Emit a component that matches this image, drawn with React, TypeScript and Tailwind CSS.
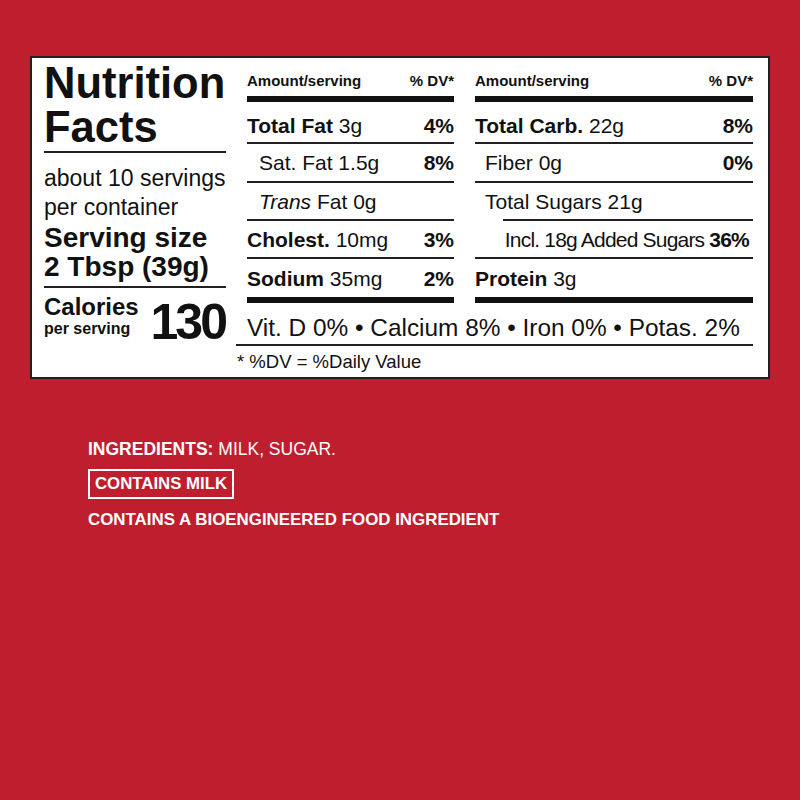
import React from 'react';

type RowProps = {
  label: React.ReactNode;
  dv?: string;
  h: string;
  line?: boolean;
  className?: string;
};

const Row = ({ label, dv, h, line = true, className = '' }: RowProps) => (
  <div className={`${h} flex items-center justify-between ${line ? 'border-b-2 border-[#231f20]' : ''} ${className}`}>
    <span>{label}</span>
    {dv && <span className="font-bold">{dv}</span>}
  </div>
);

const Header = () => (
  <>
    <div className="h-[38px] pt-[6px] flex items-center justify-between text-[15px] font-bold leading-none">
      <span>Amount/serving</span>
      <span>% DV*</span>
    </div>
    <div className="h-[6px] bg-[#111]" />
  </>
);

const App = () => {
  return (
    <div className="w-full h-[800px] bg-[#be1e2e] overflow-hidden font-['Liberation_Sans',Arial,sans-serif] pt-[56px]">
      {/* Nutrition label */}
      <div className="ml-[30px] w-[740px] h-[323px] bg-white border-2 border-[#231f20] flex gap-[21px] pl-[12px] text-[#111]">
        {/* Left column */}
        <div className="w-[182px] flex flex-col">
          <div className="pt-[3px] text-[43.5px] font-bold leading-[44px]">
            <div>Nutrition</div>
            <div>Facts</div>
          </div>
          <div className="h-[2px] bg-[#231f20] mt-[2px]" />
          <div className="mt-[11px] text-[23px] leading-[29px]">
            <div>about 10 servings</div>
            <div>per container</div>
          </div>
          <div className="mt-[1px] text-[28px] font-bold leading-[29px]">
            <div>Serving size</div>
            <div>2 Tbsp (39g)</div>
          </div>
          <div className="h-[2px] bg-[#231f20] mt-[5px]" />
          <div className="mt-[5px] flex items-start justify-between font-bold">
            <div>
              <div className="text-[24px] leading-[27px]">Calories</div>
              <div className="text-[16px] leading-[18px]">per serving</div>
            </div>
            <div className="mt-[4px] text-[50px] leading-[50px] tracking-[-3px] mr-[1px]">130</div>
          </div>
        </div>

        {/* Right part */}
        <div className="w-[506px] flex flex-col">
          <div className="flex gap-[21px] text-[21px] leading-none">
            {/* Middle column */}
            <div className="w-[207px] flex flex-col">
              <Header />
              <Row h="h-[42px] pt-[6px]" label={<><b>Total Fat</b> 3g</>} dv="4%" />
              <Row h="h-[39px]" className="pl-[12px]" label="Sat. Fat 1.5g" dv="8%" />
              <Row h="h-[38px]" className="pl-[12px]" label={<><i>Trans</i> Fat 0g</>} />
              <Row h="h-[38px]" label={<><b>Cholest.</b> 10mg</>} dv="3%" />
              <Row h="h-[38px]" line={false} label={<><b>Sodium</b> 35mg</>} dv="2%" />
              <div className="h-[6px] bg-[#111]" />
            </div>

            {/* Right column */}
            <div className="w-[278px] flex flex-col">
              <Header />
              <Row h="h-[42px] pt-[6px]" label={<><b>Total Carb.</b> 22g</>} dv="8%" />
              <Row h="h-[39px]" className="pl-[10px]" label="Fiber 0g" dv="0%" />
              <div className="h-[38px] flex flex-col">
                <div className="flex-1 flex items-center pl-[10px]">Total Sugars 21g</div>
                <div className="h-[2px] bg-[#231f20] ml-[28px]" />
              </div>
              <div className="h-[38px] flex items-center justify-end border-b-2 border-[#231f20] tracking-[-0.8px] pr-[4px]">
                <span>
                  Incl. 18g Added Sugars <b>36%</b>
                </span>
              </div>
              <Row h="h-[38px]" line={false} label={<><b>Protein</b> 3g</>} />
              <div className="h-[6px] bg-[#111]" />
            </div>
          </div>

          {/* Vitamins */}
          <div className="-ml-[11px] pl-[11px] h-[43px] pt-[10px] flex items-center border-b-2 border-[#231f20] text-[24.4px] leading-none whitespace-nowrap">
            Vit. D 0% • Calcium 8% • Iron 0% • Potas. 2%
          </div>
          <div className="-ml-[10px] h-[31px] pt-[2px] flex items-center text-[18.5px] leading-none">
            * %DV = %Daily Value
          </div>
        </div>
      </div>

      {/* Ingredients */}
      <div className="ml-[88px] text-white">
        <div className="mt-[59px] text-[17.5px] leading-[22px]">
          <b>INGREDIENTS:</b> MILK, SUGAR.
        </div>
        <div className="mt-[9px] w-fit border-2 border-white px-[5px] py-[2px] text-[16.8px] leading-[22px] font-bold">
          CONTAINS MILK
        </div>
        <div className="mt-[10px] text-[16.9px] leading-[22px] font-bold">
          CONTAINS A BIOENGINEERED FOOD INGREDIENT
        </div>
      </div>
    </div>
  );
};

export default App;
